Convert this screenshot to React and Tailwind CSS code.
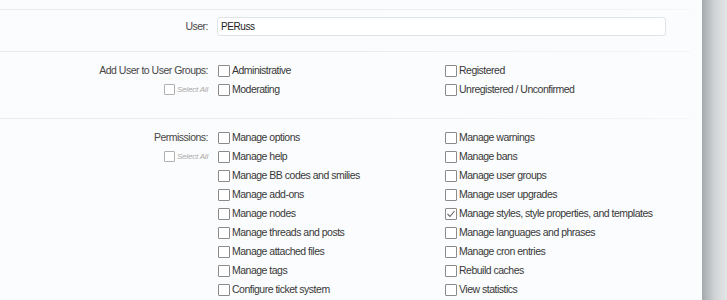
import React from "react";

const font = { fontFamily: '"Liberation Sans", Arial, sans-serif' };

function Box({ checked }) {
  return (
    <span className="inline-flex w-[12px] h-[12px] shrink-0 border border-[#8a8a8a] bg-white rounded-[1px] items-center justify-center">
      {checked && (
        <svg width="10" height="10" viewBox="0 0 10 10">
          <path d="M1.5 5 L4 7.5 L8.5 2" fill="none" stroke="#666" strokeWidth="1.1" />
        </svg>
      )}
    </span>
  );
}

function Item({ label, checked }) {
  return (
    <div className="h-[19px] flex items-center">
      <Box checked={checked} />
      <span className="ml-[2px] text-[10.5px] tracking-[-0.5px] text-[#383838] whitespace-nowrap">{label}</span>
    </div>
  );
}

function Label({ text, selectAll }) {
  return (
    <div className="w-[208px] shrink-0 flex flex-col items-end">
      <div className="h-[19px] flex items-center text-[10.5px] tracking-[-0.5px] text-[#474747]">{text}</div>
      {selectAll && (
        <div className="h-[19px] flex items-center">
          <span className="inline-flex w-[11px] h-[11px] border border-[#b0b0b0] bg-white rounded-[1px]" />
          <span className="ml-[2px] text-[8px] italic text-[#aaa] tracking-[-0.2px]">Select All</span>
        </div>
      )}
    </div>
  );
}

function Sep() {
  return <div className="h-px w-[690px] bg-gradient-to-r from-[#e6edf2] via-[#e6edf2] to-[#f3f6f8]" />;
}

export default function App() {
  const left = [
    "Manage options",
    "Manage help",
    "Manage BB codes and smilies",
    "Manage add-ons",
    "Manage nodes",
    "Manage threads and posts",
    "Manage attached files",
    "Manage tags",
    "Configure ticket system",
  ];
  const right = [
    ["Manage warnings"],
    ["Manage bans"],
    ["Manage user groups"],
    ["Manage user upgrades"],
    ["Manage styles, style properties, and templates", true],
    ["Manage languages and phrases"],
    ["Manage cron entries"],
    ["Rebuild caches"],
    ["View statistics"],
  ];
  return (
    <div className="w-[727px] h-[300px] overflow-hidden flex bg-[#fbfcfd]" style={font}>
      <div className="w-[702px] shrink-0 flex flex-col">
        <div className="h-[9px]" />
        <Sep />
        <div className="flex pt-[7px] pb-[15px]">
          <div className="w-[208px] shrink-0 h-[19px] flex items-center justify-end text-[10.5px] tracking-[-0.5px] text-[#474747]">User:</div>
          <div className="ml-[9px] w-[449px] h-[19px] bg-white border border-[#dfe4e8] rounded-[3px] flex items-center pl-[3px] text-[10px] tracking-[-0.4px] text-[#222]">
            PERuss
          </div>
        </div>
        <Sep />
        <div className="flex pt-[9px] pb-[19px]">
          <Label text="Add User to User Groups:" selectAll />
          <div className="ml-[10px] w-[227px] flex flex-col">
            <Item label="Administrative" />
            <Item label="Moderating" />
          </div>
          <div className="flex flex-col">
            <Item label="Registered" />
            <Item label="Unregistered / Unconfirmed" />
          </div>
        </div>
        <Sep />
        <div className="flex pt-[9px]">
          <Label text="Permissions:" selectAll />
          <div className="ml-[10px] w-[227px] flex flex-col">
            {left.map((l) => (
              <Item key={l} label={l} />
            ))}
          </div>
          <div className="flex flex-col">
            {right.map(([l, c]) => (
              <Item key={l} label={l} checked={c} />
            ))}
          </div>
        </div>
      </div>
      <div className="flex-1 bg-gradient-to-r from-[#a3a9ac] via-[#d0d3d5] to-[#e4e5e6]" />
    </div>
  );
}
